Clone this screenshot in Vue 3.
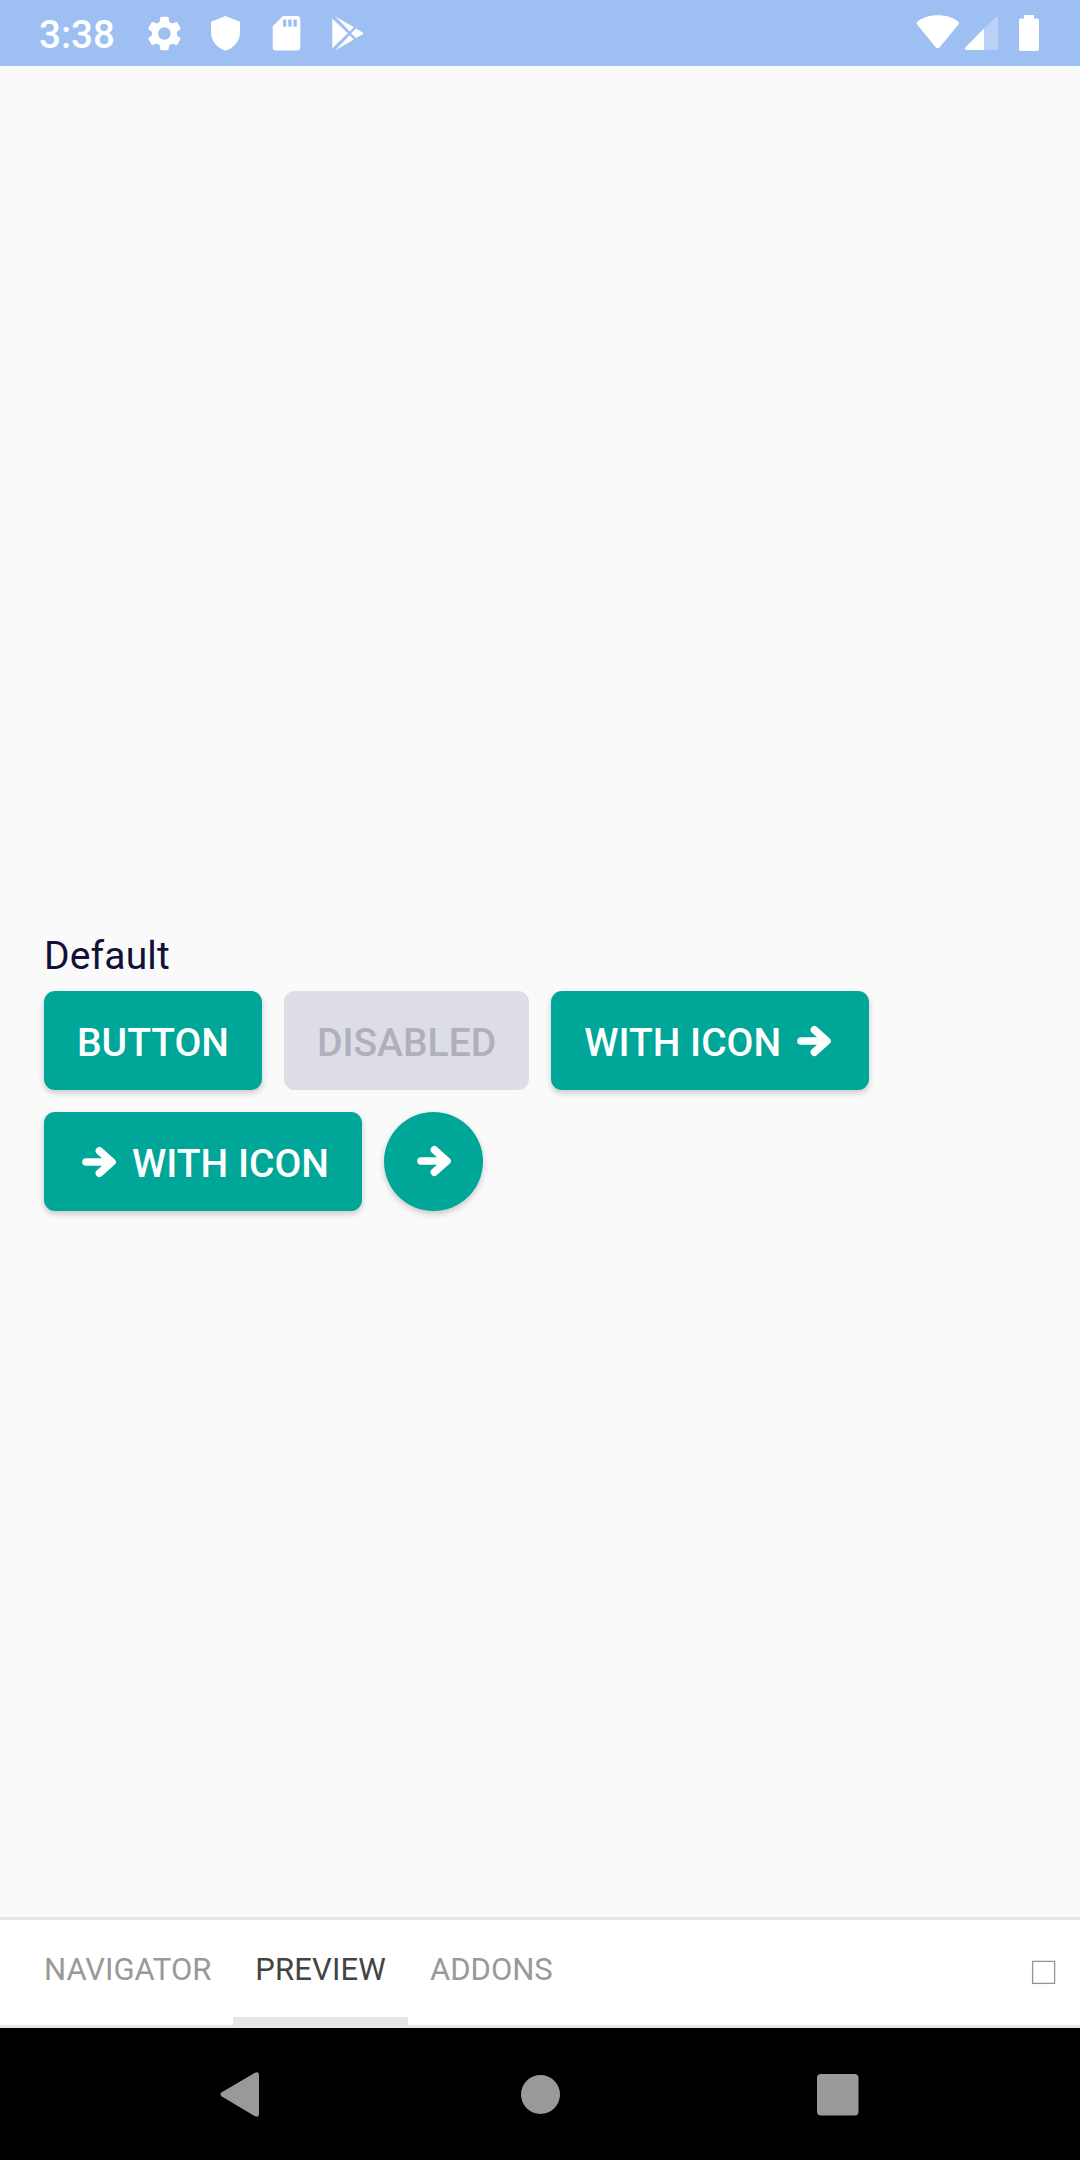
<script setup>
const arrow = 'M9 22H34M22.4 10.8L35 22L22.4 33.2'
const tabs = [
  { label: 'NAVIGATOR', active: false },
  { label: 'PREVIEW', active: true },
  { label: 'ADDONS', active: false },
]
</script>

<template>
  <div class="screen">
    <header class="status">
      <span class="clock">3:38</span>
      <svg class="left-icons" width="230" height="66" viewBox="140 0 230 66" fill="#fff">
        <g transform="translate(143.6 12.7) scale(1.735)">
          <path d="M19.14 12.94c.04-.3.06-.61.06-.94 0-.32-.02-.64-.07-.94l2.03-1.58c.18-.14.23-.41.12-.61l-1.92-3.32c-.12-.22-.37-.29-.59-.22l-2.39.96c-.5-.38-1.03-.7-1.62-.94l-.36-2.54c-.04-.24-.24-.41-.48-.41h-3.84c-.24 0-.43.17-.47.41l-.36 2.54c-.59.24-1.13.57-1.62.94l-2.39-.96c-.22-.08-.47 0-.59.22L2.74 8.87c-.12.21-.08.47.12.61l2.03 1.58c-.05.3-.09.63-.09.94s.02.64.07.94l-2.03 1.58c-.18.14-.23.41-.12.61l1.92 3.32c.12.22.37.29.59.22l2.39-.96c.5.38 1.03.7 1.62.94l.36 2.54c.05.24.24.41.48.41h3.84c.24 0 .44-.17.47-.41l.36-2.54c.59-.24 1.13-.56 1.62-.94l2.39.96c.22.08.47 0 .59-.22l1.92-3.32c.12-.22.07-.47-.12-.61l-2.01-1.58zM12 15.6c-1.98 0-3.6-1.62-3.6-3.6s1.62-3.6 3.6-3.6 3.6 1.62 3.6 3.6-1.62 3.6-3.6 3.6z" />
        </g>
        <path d="M225.5 16L240 21.7V32C240 41 234 48.300 225.500 50.700C217 48.300 211 41 211 32V21.700Z" />
        <path fill-rule="evenodd" d="M283 16H297Q300.300 16 300.300 19.300V47.300Q300.300 50.500 297 50.500H276Q272.700 50.500 272.700 47.300V26.300ZM283 19.500V26.700H286.400V19.500ZM288.200 19.500V26.700H291.600V19.500ZM293.400 19.500V26.700H296.800V19.500Z" />
        <path d="M332.300 18.500L347.700 33.300L332.300 48.200ZM335.300 16.500L354 27.300L349.700 31.400ZM335.300 50.200L354 39.400L349.700 35.300ZM356 28.600L362.700 32.500Q364 33.300 362.700 34.200L356 38.100L351.200 33.300Z" />
      </svg>
      <svg class="right-icons" width="130" height="66" viewBox="910 0 130 66" fill="#fff">
        <path d="M917.100 24.600Q915.700 22.800 917.500 21.500C928 13.300 948 13.300 958 21.500Q959.800 22.800 958.400 24.600L939.500 47.400Q937.700 49.300 935.900 47.400Z" />
        <path fill-opacity=".3" d="M984 28.800L995.300 17.500Q998 15.700 998 18.700V48.300Q998 50 996.300 50H984Z" />
        <path d="M984 28.600V50H966.500Q963.900 49.500 965.500 47.300Z" />
        <path d="M1024 15H1034V18.500H1037.300Q1039 18.500 1039 20.200V49.300Q1039 51 1037.300 51H1020.700Q1019 51 1019 49.300V20.200Q1019 18.500 1020.700 18.500H1024Z" />
      </svg>
    </header>

    <main class="stage">
      <div class="title">Default</div>
      <div class="buttons">
        <button class="btn">BUTTON</button>
        <button class="btn disabled" disabled>DISABLED</button>
        <button class="btn">
          WITH ICON
          <svg class="arrow after" viewBox="0 0 44 44"><path :d="arrow" /></svg>
        </button>
        <button class="btn">
          <svg class="arrow before" viewBox="0 0 44 44"><path :d="arrow" /></svg>
          WITH ICON
        </button>
        <button class="btn round">
          <svg class="arrow" viewBox="0 0 44 44"><path :d="arrow" /></svg>
        </button>
      </div>
    </main>

    <nav class="tabs">
      <span v-for="t in tabs" :key="t.label" class="tab" :class="{ active: t.active }">{{ t.label }}</span>
      <svg class="box" width="26" height="26" viewBox="0 0 26 26">
        <rect x="1.600" y="1.400" width="22" height="22" fill="none" stroke="#949494" stroke-width="1.300" />
      </svg>
    </nav>

    <footer class="system">
      <svg width="1080" height="132" viewBox="0 2028 1080 132" fill="#999">
        <path d="M255 2072.800Q258.900 2071 259 2075.500V2113.500Q258.900 2118 255 2116.300L221.800 2096.600Q219.200 2094.500 221.800 2092.300Z" />
        <circle cx="540.500" cy="2094.500" r="19.500" />
        <rect x="817" y="2074" width="41.500" height="41.500" rx="4" />
      </svg>
    </footer>
  </div>
</template>

<style>
body {
  margin: 0;
}
</style>

<style scoped>
.screen {
  width: 1080px;
  height: 2160px;
  display: flex;
  flex-direction: column;
  overflow: hidden;
  background: #fafafa;
  font-family: Roboto, "Noto Sans", sans-serif;
}
.status {
  height: 66px;
  flex: none;
  display: flex;
  background: #9dbff2;
  color: #fff;
}
.clock {
  width: 101px;
  padding-left: 39px;
  font-size: 38.500px;
  font-weight: 500;
  line-height: 70px;
}
.right-icons {
  margin-left: auto;
  margin-right: 40px;
}
.stage {
  flex: 1;
  padding: 864px 44px 0;
}
.title {
  color: #120f38;
  font-size: 39px;
  letter-spacing: 0.15px;
  line-height: 52px;
  margin-bottom: 9px;
}
.buttons {
  display: flex;
  flex-wrap: wrap;
  gap: 22px;
}
.btn {
  box-sizing: border-box;
  display: flex;
  align-items: center;
  height: 99px;
  border: 0;
  border-radius: 11px;
  padding: 5px 33px 0;
  background: #00a698;
  color: #fff;
  font: 500 39px/52px Roboto, "Noto Sans", sans-serif;
  white-space: nowrap;
  box-shadow: 0 3px 6px rgba(0, 0, 0, 0.2);
}
.disabled {
  background: #dddde6;
  color: #b0b0bd;
  box-shadow: none;
}
.arrow {
  width: 44px;
  height: 44px;
  flex: none;
  margin-top: -4px;
  fill: none;
  stroke: #fff;
  stroke-width: 7.600;
  stroke-linecap: round;
  stroke-linejoin: round;
}
.after {
  margin-left: 11px;
}
.before {
  margin-right: 11px;
}
.round {
  width: 99px;
  padding: 3px 0 0;
  justify-content: center;
  border-radius: 50%;
}
.tabs {
  height: 105px;
  flex: none;
  display: flex;
  padding-left: 22px;
  border-top: 3px solid #e6e6e6;
  border-bottom: 3px solid #e6e6e6;
  background: #fff;
}
.tab {
  box-sizing: border-box;
  height: 105px;
  padding: 0 22px;
  border-bottom: 8px solid transparent;
  color: #999;
  font-size: 31px;
  line-height: 99px;
}
.active {
  color: #444;
  border-color: #e6e6e6;
  letter-spacing: 0.15px;
}
.box {
  margin: 40px 23px 0 auto;
}
.system {
  height: 132px;
  flex: none;
  background: #000;
}
.system svg {
  display: block;
}
</style>
